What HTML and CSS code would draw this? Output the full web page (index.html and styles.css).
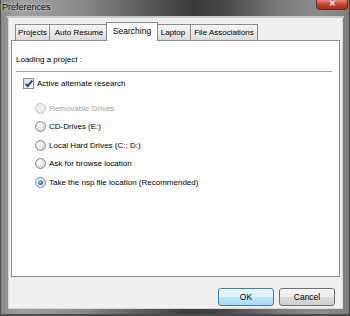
FILE: index.html
```html
<!DOCTYPE html>
<html lang="en">
<head>
    <meta charset="UTF-8">
    <title>Preferences</title>
    <link rel="stylesheet" href="styles.css">
</head>
<body>
    <div class="window">
        <div class="titlebar">
            <span class="caption">Preferences</span>
            <span class="close">&#x2715;</span>
        </div>
        <div class="client">
            <div class="tabs">
                <div class="tab t-projects">Projects</div>
                <div class="tab t-resume">Auto Resume</div>
                <div class="tab t-search active">Searching</div>
                <div class="tab t-laptop">Laptop</div>
                <div class="tab t-files">File Associations</div>
            </div>
            <div class="panel">
                <div class="heading">Loading a project :</div>
                <div class="separator"></div>
                <div class="check-row">
                    <span class="checkbox checked"></span>
                    <span>Active alternate research</span>
                </div>
                <div class="radios">
                    <div class="radio-row disabled"><span class="radio"></span><span>Removable Drives</span></div>
                    <div class="radio-row"><span class="radio"></span><span>CD-Drives (E:)</span></div>
                    <div class="radio-row"><span class="radio"></span><span>Local Hard Drives (C:; D:)</span></div>
                    <div class="radio-row"><span class="radio"></span><span>Ask for browse location</span></div>
                    <div class="radio-row"><span class="radio selected"></span><span>Take the nsp file location (Recommended)</span></div>
                </div>
            </div>
            <div class="actions">
                <button class="btn default">OK</button>
                <button class="btn">Cancel</button>
            </div>
        </div>
    </div>
</body>
</html>
```

FILE: styles.css
```css
* {
    margin: 0;
    padding: 0;
    box-sizing: border-box;
}

body {
    width: 350px;
    height: 316px;
    overflow: hidden;
    font-family: 'Liberation Sans', Arial, sans-serif;
    font-size: 8px;
    color: #000000;
}

.window {
    width: 350px;
    height: 316px;
    display: flex;
    flex-direction: column;
    padding: 0 6px 5px 7px;
    background: linear-gradient(90deg, #8a8a8a 0%, #a0a0a0 6%, #8c8c8c 22%, #5e5e5e 40%, #3a3a3a 55%, #4a4a4a 65%, #7a7a7a 80%, #8e8e8e 92%, #7c7c7c 100%);
    border-left: 1px solid #4a4a4a;
    border-right: 1px solid #3c3c3c;
    border-bottom: 2px solid #4a4a4a;
}

.titlebar {
    height: 18px;
    display: flex;
    align-items: flex-start;
    justify-content: space-between;
    border-bottom: 2px solid #c8c8c8;
    margin: 0 -1px;
}

.caption {
    margin-left: -5px;
    margin-top: 2px;
    font-size: 9px;
    color: #101010;
    text-shadow: 0 0 3px #d8d8d8, 0 0 5px #c8c8c8;
}

.close {
    width: 32px;
    height: 10px;
    margin-right: -4px;
    background: linear-gradient(#e08a7c, #c43b28 55%, #a8301f);
    border: 1px solid #6e2a22;
    border-top: none;
    border-radius: 0 0 4px 4px;
    color: #ffffff;
    font-size: 8px;
    font-weight: bold;
    line-height: 8px;
    text-align: center;
}

.client {
    flex: 1;
    background-color: #f0f0f0;
    display: flex;
    flex-direction: column;
    padding: 4px 2px 0 2px;
    border: 1px solid #d8d8d8;
    border-top: none;
}

.tabs {
    display: flex;
    height: 18px;
    padding-left: 4px;
    align-items: flex-end;
    position: relative;
    z-index: 1;
}

.tab {
    height: 16px;
    border: 1px solid #898c95;
    border-bottom: none;
    border-right: none;
    background: linear-gradient(#f6f6f6, #e6e6e6 60%, #dcdcdc);
    text-align: center;
    line-height: 15px;
    white-space: nowrap;
}

.t-projects { width: 34px; }
.t-resume { width: 59px; }

.tab.active {
    width: 52px;
    height: 19px;
    margin: 0 -2px -1px -2px;
    background: #ffffff;
    border-right: 1px solid #898c95;
    position: relative;
    z-index: 2;
    line-height: 16px;
    font-size: 8.5px;
}

.t-laptop {
    width: 34px;
    border-left: none;
}

.t-files {
    width: 68px;
    border-right: 1px solid #898c95;
}

.panel {
    height: 237px;
    background-color: #ffffff;
    border: 1px solid #898c95;
    padding: 12px 4px 0 4px;
}

.heading {
    height: 14px;
    line-height: 14px;
}

.separator {
    height: 1px;
    margin: 4px 3px 0 0;
    background-color: #a0a0a0;
}

.check-row {
    display: flex;
    align-items: center;
    height: 18px;
    margin-top: 2px;
    padding-left: 7px;
    gap: 3px;
}

.checkbox {
    width: 11px;
    height: 11px;
    border: 1px solid #8f8f8f;
    background: linear-gradient(135deg, #dcdcdc, #fafafa);
    position: relative;
}

.checkbox.checked::after {
    content: "";
    position: absolute;
    left: 3px;
    top: 0;
    width: 2px;
    height: 6px;
    border: solid #2c4a8a;
    border-width: 0 2px 2px 0;
    transform: rotate(40deg);
}

.radios {
    margin-top: 7px;
    padding-left: 19px;
}

.radio-row {
    display: flex;
    align-items: center;
    height: 18.5px;
    gap: 3px;
}

.radio {
    width: 11px;
    height: 11px;
    border-radius: 50%;
    border: 1px solid #8a8a8a;
    background: radial-gradient(circle at 40% 40%, #ffffff, #dcdcdc 70%, #c8c8c8);
    position: relative;
}

.radio.selected::after {
    content: "";
    position: absolute;
    left: 2px;
    top: 2px;
    width: 5px;
    height: 5px;
    border-radius: 50%;
    background: radial-gradient(circle at 40% 35%, #8ad0f8, #1e6fb8 70%, #0e4a8a);
}

.radio-row.disabled {
    color: #a3a3a3;
}

.radio-row.disabled .radio {
    border-color: #c6c6c6;
    background: #ececec;
}

.actions {
    display: flex;
    justify-content: flex-end;
    gap: 5px;
    padding: 11px 5px 0 0;
}

.btn {
    width: 56px;
    height: 18px;
    font-family: 'Liberation Sans', Arial, sans-serif;
    font-size: 8.5px;
    color: #000000;
    border: 1px solid #707070;
    border-radius: 3px;
    background: linear-gradient(#f4f4f4, #ececec 50%, #dddddd 51%, #cfcfcf);
}

.btn.default {
    border-color: #3c7fb1;
    background: linear-gradient(#eaf6fd, #d9f0fc 50%, #bee6fd 51%, #a7d9f5);
}
```
